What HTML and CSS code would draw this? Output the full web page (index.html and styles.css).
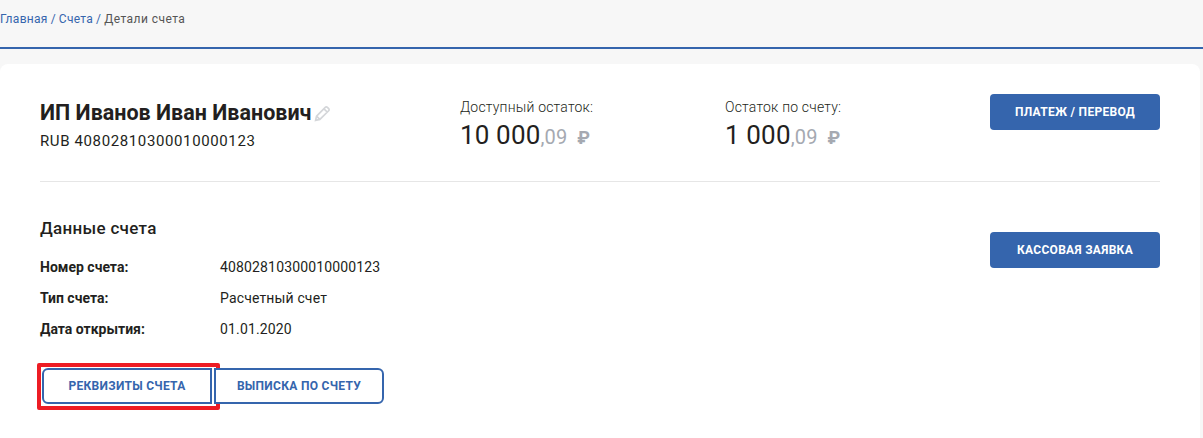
FILE: index.html
```html
<!DOCTYPE html>
<html lang="ru">
<head>
<meta charset="utf-8">
<title>Детали счета</title>
<link rel="stylesheet" href="styles.css">
</head>
<body>
<nav class="crumbs"><a>Главная</a> <a>/</a> <a>Счета</a> <a>/</a> <span>Детали счета</span></nav>
<main class="card">
  <section class="top">
    <div class="owner">
      <h1 class="name">ИП Иванов Иван Иванович<svg class="pen" width="17" height="17" viewBox="0 0 16 16"><path d="M1.5 14.5l.9-4L10.6 2.2a1.4 1.4 0 0 1 2 0l1.2 1.2a1.4 1.4 0 0 1 0 2L5.5 13.6z M9.4 3.6l3 3 M2.4 10.5l3.1 3.1" fill="none" stroke="#d4d6d9" stroke-width="1.6"/></svg></h1>
      <div class="acc">RUB 40802810300010000123</div>
    </div>
    <div class="bal b1">
      <div class="bal-label">Доступный остаток:</div>
      <div class="bal-val">10 000<span class="cents">,09</span><span class="cur">₽</span></div>
    </div>
    <div class="bal b2">
      <div class="bal-label">Остаток по счету:</div>
      <div class="bal-val">1 000<span class="cents">,09</span><span class="cur">₽</span></div>
    </div>
    <button class="btn solid">ПЛАТЕЖ / ПЕРЕВОД</button>
  </section>
  <section class="details">
    <div class="info">
      <h2 class="title">Данные счета</h2>
      <dl class="rows">
        <dt>Номер счета:</dt><dd>40802810300010000123</dd>
        <dt>Тип счета:</dt><dd>Расчетный счет</dd>
        <dt>Дата открытия:</dt><dd>01.01.2020</dd>
      </dl>
      <div class="actions">
        <button class="btn outline first">РЕКВИЗИТЫ СЧЕТА<span class="mark"></span></button>
        <button class="btn outline second">ВЫПИСКА ПО СЧЕТУ</button>
      </div>
    </div>
    <button class="btn solid cash">КАССОВАЯ ЗАЯВКА</button>
  </section>
</main>
</body>
</html>
```
FILE: styles.css
```css
* { box-sizing: border-box; }
html, body { margin: 0; height: 438px; overflow: hidden; }
body { background: #f7f7f7; font-family: Roboto, sans-serif; color: #231f20; }
.crumbs { height: 49px; padding-top: 12px; border-bottom: 2px solid #3565ad; font-size: 12px; line-height: 15px; letter-spacing: .3px; word-spacing: -.4px; white-space: nowrap; }
.crumbs a { color: #3565ad; }
.crumbs span { color: #555; letter-spacing: .45px; word-spacing: 0; }
.card { width: 1200px; height: 374px; margin-top: 15px; padding: 30px 40px 0; background: #fff; border-radius: 8px 8px 0 0; }
.top { display: flex; align-items: flex-start; height: 88px; border-bottom: 1px solid #e6e6e6; }
.owner { width: 420px; padding-top: 6px; }
.name { margin: 0; font-size: 21.5px; line-height: 26px; font-weight: 700; white-space: nowrap; display: flex; align-items: center; }
.pen { margin-left: 2px; }
.acc { font-size: 15px; line-height: 18px; margin-top: 6px; letter-spacing: .62px; }
.bal { width: 265px; padding-top: 4px; }
.bal-label { font-size: 14px; line-height: 18px; font-weight: 300; letter-spacing: .2px; white-space: nowrap; }
.bal-val { font-size: 26px; line-height: 30px; margin-top: 4px; font-weight: 400; letter-spacing: .15px; white-space: nowrap; }
.cents { font-size: 20px; color: #a5a9b1; font-weight: 400; }
.cur { font-size: 18px; color: #a5a9b1; margin-left: 10px; font-weight: 700; }
.btn { display: block; font-family: inherit; font-size: 12px; font-weight: 700; border-radius: 4px; letter-spacing: .3px; white-space: nowrap; padding: 0; }
.solid { width: 170px; height: 36px; background: #3565ad; border: 0; color: #fff; flex: none; }
.top .solid { margin-left: auto; }
.details { display: flex; justify-content: space-between; align-items: flex-start; padding-top: 35px; }
.info { flex: 1; }
.title { margin: 0; font-size: 17px; line-height: 20px; font-weight: 500; letter-spacing: .3px; margin-top: 1px; }
.rows { display: grid; grid-template-columns: 180px 1fr; grid-auto-rows: 31px; margin: 13px 0 0; font-size: 14px; align-items: center; }
.rows dt { font-weight: 700; }
.rows dd { margin: 0; font-weight: 400; letter-spacing: .15px; }
.actions { display: flex; gap: 2px; margin: 24px 0 0 2px; }
.cash { margin-top: 15px; }
.outline { position: relative; width: 170px; height: 36px; background: #fff; border: 2px solid #3565ad; color: #3565ad; }
.first { border-radius: 6px 0 0 6px; }
.second { border-radius: 0 6px 6px 0; }
.mark { position: absolute; left: -7px; top: -7px; width: 183px; height: 47px; border: 4px solid #ed1c24; border-radius: 2px; pointer-events: none; }
```
